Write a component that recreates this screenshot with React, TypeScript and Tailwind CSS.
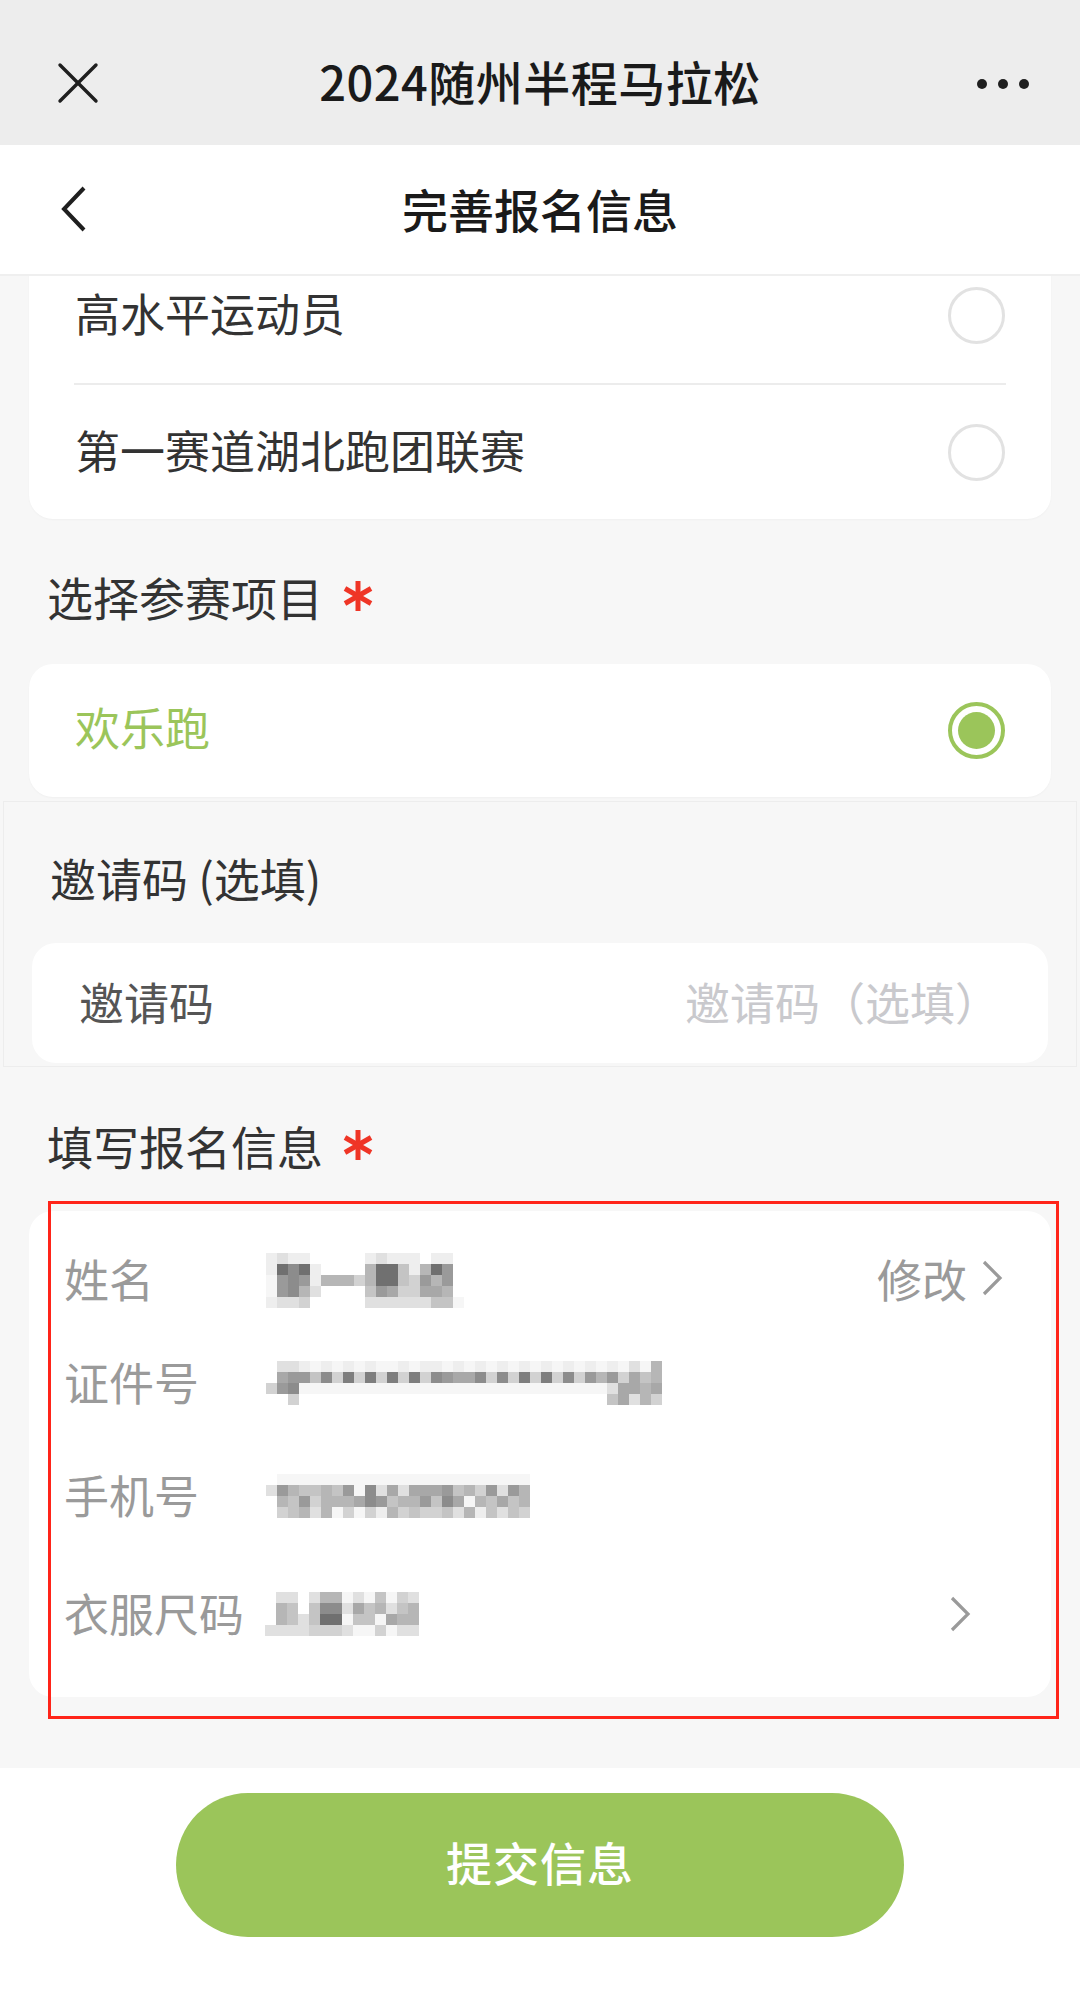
import React from "react";

const GRAY: Record<string, string> = {
  "0": "#707070",
  "1": "#7e7e7e",
  "2": "#8c8c8c",
  "3": "#9a9a9a",
  "4": "#a8a8a8",
  "5": "#b6b6b6",
  "6": "#c4c4c4",
  "7": "#d2d2d2",
  "8": "#e0e0e0",
  "9": "#eeeeee",
  w: "#f6f6f6",
};

const NAME = [
  ".9899.....98999.99.",
  ".90209....50069503.",
  ".w3239555750067353.",
  ".w3258....63477445.",
  ".9887.....88888866w",
];

const ID = [
  "..889w9w9w9ww9w99w9w9w9w9w9w9w9w9w8w5w58".slice(0, 37),
  "..43362717171717234427271717273537465 4".replace(/ /g, "").slice(0, 37),
  ".732wwwwwwwwwwwwwwwwwwwwwwwwwwww84454",
  "...7............................64857",
];

const PHONE = [
  "..wwwwwwwwwwwwwwwwwwwwwww",
  ".83566563w28484443657383 5".replace(/ /g, ""),
  "..5637555423655362 4w56465".replace(/ /g, ""),
  "..7658 5w7w79576776 85968 67".replace(/ /g, ""),
];

const SIZE = [
  ".88.855w8w6w78",
  ".56.62284658 65".replace(/ /g, ""),
  ".568600w66w455",
  "88887778ww7w88",
];

function Mosaic({ rows }: { rows: string[] }) {
  return (
    <div className="flex flex-col">
      {rows.map((r, i) => (
        <div key={i} className="flex">
          {r.split("").map((c, j) => (
            <div
              key={j}
              className="w-[11px] h-[11px]"
              style={{ background: GRAY[c] ?? "transparent" }}
            />
          ))}
        </div>
      ))}
    </div>
  );
}

function Star() {
  return (
    <svg width="30" height="32" viewBox="0 0 30 32" className="ml-[20px]">
      <g stroke="#ef3526" strokeWidth="5" strokeLinecap="butt">
        <line x1="15" y1="1" x2="15" y2="31" />
        <line x1="2" y1="8.5" x2="28" y2="23.5" />
        <line x1="2" y1="23.5" x2="28" y2="8.5" />
      </g>
    </svg>
  );
}

function Radio({ checked }: { checked?: boolean }) {
  if (checked) {
    return (
      <div className="w-[57px] h-[57px] rounded-full border-[4px] border-[#9bc55a] flex items-center justify-center">
        <div className="w-[37px] h-[37px] rounded-full bg-[#9bc55a]" />
      </div>
    );
  }
  return <div className="w-[57px] h-[57px] rounded-full border-[3px] border-[#e2e2e2]" />;
}

function ChevronRight({ className = "" }: { className?: string }) {
  return (
    <svg width="22" height="36" viewBox="0 0 22 36" className={className}>
      <polyline points="3,2 19,18 3,34" fill="none" stroke="#9a9a9a" strokeWidth="3.2" strokeLinejoin="miter" />
    </svg>
  );
}

export default function App() {
  const font = { fontFamily: '"Noto Sans CJK SC", "Noto Sans", sans-serif' };
  return (
    <div className="w-[1080px] h-[1993px] flex flex-col bg-[#f7f7f7] overflow-hidden" style={font}>
      {/* WeChat top bar */}
      <div className="h-[145px] shrink-0 bg-[#ededed] relative flex items-center justify-center">
        <svg width="42" height="42" viewBox="0 0 42 42" className="absolute left-[57px] top-[62px]">
          <g stroke="#1f1f1f" strokeWidth="3.4" strokeLinecap="round">
            <line x1="3" y1="3" x2="39" y2="39" />
            <line x1="39" y1="3" x2="3" y2="39" />
          </g>
        </svg>
        <div className="mt-[16px] text-[47px] font-medium text-[#1a1a1a] tracking-[0.5px] leading-none">
          2024随州半程马拉松
        </div>
        <div className="absolute left-[977px] top-[79px] flex gap-[11px]">
          <div className="w-[10px] h-[10px] rounded-full bg-[#1f1f1f]" />
          <div className="w-[10px] h-[10px] rounded-full bg-[#1f1f1f]" />
          <div className="w-[10px] h-[10px] rounded-full bg-[#1f1f1f]" />
        </div>
      </div>

      {/* Page header */}
      <div className="h-[131px] shrink-0 bg-white border-b-[2px] border-[#efefef] relative flex items-center justify-center">
        <svg width="28" height="48" viewBox="0 0 28 48" className="absolute left-[60px] top-[40px]">
          <polyline points="24,3 4,24 24,45" fill="none" stroke="#1f1f1f" strokeWidth="4" strokeLinejoin="miter" />
        </svg>
        <div className="mb-[4px] text-[46px] font-medium text-[#1a1a1a] leading-none">完善报名信息</div>
      </div>

      {/* Scroll content */}
      <div className="flex-1 overflow-hidden bg-[#f7f7f7] relative">
        <div className="mx-[29px] -mt-[29px] bg-white rounded-[24px] shadow-[0_1px_2px_rgba(0,0,0,0.03)]">
          <div className="h-[136px] px-[46px] flex items-center justify-between">
            <span className="mb-[6px] text-[45px] text-[#333333] leading-none">高水平运动员</span>
            <Radio />
          </div>
          <div className="mx-[45px] h-[2px] bg-[#ececec]" />
          <div className="h-[134px] px-[46px] flex items-center justify-between">
            <span className="mb-[6px] text-[45px] text-[#333333] leading-none">第一赛道湖北跑团联赛</span>
            <Radio />
          </div>
        </div>

        <div className="h-[145px] pt-[8px] pl-[47px] flex items-center">
          <span className="text-[46px] text-[#333333] leading-none">选择参赛项目</span>
          <Star />
        </div>

        <div className="mx-[29px] h-[133px] bg-white rounded-[24px] px-[46px] flex items-center justify-between shadow-[0_1px_2px_rgba(0,0,0,0.03)]">
          <span className="mb-[8px] text-[45px] text-[#9bc55a] leading-none">欢乐跑</span>
          <Radio checked />
        </div>

        <div className="mt-[4px] mx-[3px] border border-[#ededed] bg-[#f7f7f7] pb-[3px]">
          <div className="h-[141px] pt-[8px] pl-[46px] flex items-center">
            <span className="text-[46px] text-[#333333] leading-none">邀请码 (选填)</span>
          </div>
          <div className="mx-[28px] h-[120px] bg-white rounded-[24px] pl-[47px] pr-[48px] flex items-center justify-between">
            <span className="mb-[4px] text-[45px] text-[#555555] leading-none">邀请码</span>
            <span className="mb-[4px] text-[45px] text-[#c9c9cd] leading-none">邀请码（选填）</span>
          </div>
        </div>

        <div className="h-[144px] pt-[12px] pl-[47px] flex items-center">
          <span className="text-[46px] text-[#333333] leading-none">填写报名信息</span>
          <Star />
        </div>

        <div className="mx-[29px] h-[486px] bg-white rounded-[24px] relative pt-[37px] pl-[35px]">
          <div className="h-[60px] flex items-center">
            <span className="w-[191px] text-[45px] text-[#9a9a9a] leading-none">姓名</span>
            <div className="mt-[4px]">
              <Mosaic rows={NAME} />
            </div>
            <div className="ml-auto mr-[48px] flex items-center gap-[14px]">
              <span className="text-[45px] text-[#9a9a9a] leading-none">修改</span>
              <ChevronRight />
            </div>
          </div>
          <div className="mt-[43px] h-[60px] flex items-center">
            <span className="w-[191px] text-[45px] text-[#9a9a9a] leading-none">证件号</span>
            <div className="mt-[4px]">
              <Mosaic rows={ID} />
            </div>
          </div>
          <div className="mt-[53px] h-[60px] flex items-center">
            <span className="w-[191px] text-[45px] text-[#9a9a9a] leading-none">手机号</span>
            <div className="mt-[4px]">
              <Mosaic rows={PHONE} />
            </div>
          </div>
          <div className="mt-[58px] h-[60px] flex items-center">
            <span className="w-[191px] text-[45px] text-[#9a9a9a] leading-none whitespace-nowrap">衣服尺码</span>
            <div className="ml-[10px] mt-[4px]">
              <Mosaic rows={SIZE} />
            </div>
            <ChevronRight className="ml-auto mr-[80px] mt-[4px]" />
          </div>
          <div className="absolute top-[-10px] left-[19px] right-[-8px] bottom-[-22px] border-[3px] border-[#ff2419] pointer-events-none" />
        </div>
      </div>

      {/* Footer */}
      <div className="h-[225px] shrink-0 bg-white shadow-[0_-3px_8px_rgba(0,0,0,0.04)] flex justify-center pt-[25px]">
        <div className="w-[728px] h-[144px] rounded-full bg-[#9bc55a] flex items-center justify-center">
          <span className="mb-[8px] text-[46px] font-medium text-white leading-none tracking-[1px]">提交信息</span>
        </div>
      </div>
    </div>
  );
}
